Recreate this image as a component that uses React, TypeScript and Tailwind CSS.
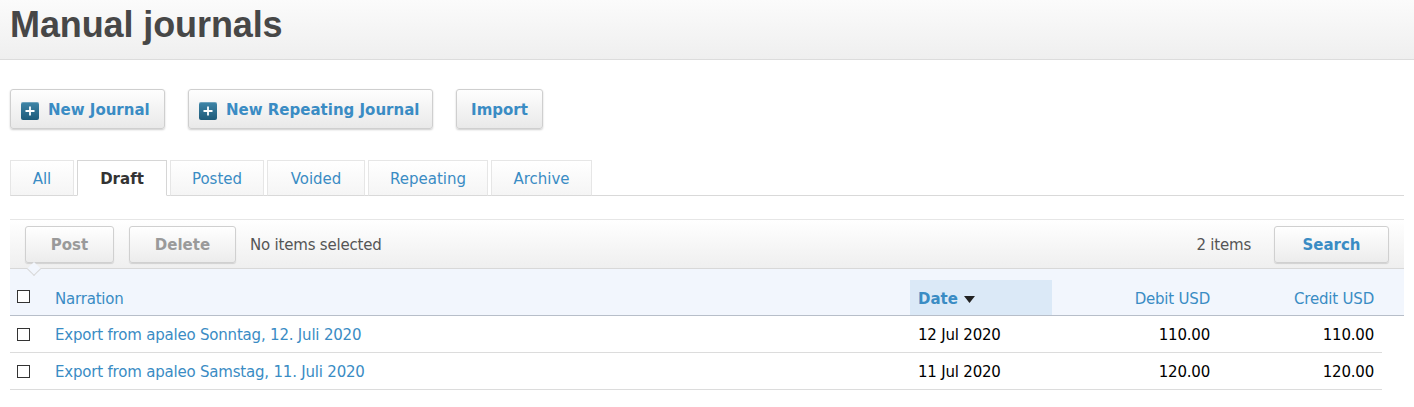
import React from 'react';

const body = { fontFamily: '"DejaVu Sans", Verdana, sans-serif' };

function PlusIcon() {
  return (
    <span className="flex h-[18px] w-[18px] items-center justify-center rounded-[2px] bg-gradient-to-b from-[#3f86a8] to-[#1f5b7a] shadow-[inset_0_1px_0_rgba(255,255,255,0.25)]">
      <svg width="12" height="12" viewBox="0 0 12 12">
        <path d="M6 1.5v9M1.5 6h9" stroke="#fff" strokeWidth="1.8" />
      </svg>
    </span>
  );
}

function ActionButton({ label, icon, width }: { label: string; icon?: boolean; width: string }) {
  return (
    <button
      className={`flex h-[40px] ${width} items-center gap-[9px] rounded-[3px] border border-[#cfcfcf] bg-gradient-to-b from-[#fefefe] to-[#e9e9e9] px-[10px] pt-[3px] text-[15px] font-bold text-[#3a8cc4] shadow-[0_1px_2px_rgba(0,0,0,0.2)] ${icon ? '' : 'justify-center'}`}
    >
      {icon ? <PlusIcon /> : null}
      {label}
    </button>
  );
}

const tabs = [
  { label: 'All', w: 'w-[64px]' },
  { label: 'Draft', w: 'w-[90px]', active: true },
  { label: 'Posted', w: 'w-[94px]' },
  { label: 'Voided', w: 'w-[98px]' },
  { label: 'Repeating', w: 'w-[120px]' },
  { label: 'Archive', w: 'w-[101px]' },
];

const rows = [
  { narration: 'Export from apaleo Sonntag, 12. Juli 2020', date: '12 Jul 2020', debit: '110.00', credit: '110.00' },
  { narration: 'Export from apaleo Samstag, 11. Juli 2020', date: '11 Jul 2020', debit: '120.00', credit: '120.00' },
];

function Checkbox() {
  return <span className="block h-[13px] w-[13px] border border-[#333] bg-white" />;
}

const toolBtn =
  'flex h-[37px] items-center justify-center rounded-[3px] border border-[#d0d0d0] bg-gradient-to-b from-white to-[#ececec] pt-[3px] text-[15px] font-bold shadow-[0_1px_1px_rgba(0,0,0,0.13)]';

export default function App() {
  return (
    <div className="min-h-[407px] bg-white" style={body}>
      <div className="h-[60px] border-b border-[#dcdcdc] bg-gradient-to-b from-[#fbfbfb] to-[#efefef] px-[10px] pt-[7px]">
        <h1
          className="text-[36px] font-bold leading-[36px] tracking-[-0.1px] text-[#474747]"
          style={{ fontFamily: '"Liberation Sans", Arial, sans-serif' }}
        >
          Manual journals
        </h1>
      </div>

      <div className="mt-[29px] flex gap-[23px] px-[10px]">
        <ActionButton label="New Journal" icon width="w-[155px]" />
        <ActionButton label="New Repeating Journal" icon width="w-[245px]" />
        <ActionButton label="Import" width="w-[87px]" />
      </div>

      <div className="mx-[10px] mt-[31px] flex h-[36px] gap-[3px] border-b border-[#d9d9d9]">
        {tabs.map((t) => (
          <div
            key={t.label}
            className={`flex h-[36px] ${t.w} items-center justify-center border pt-[3px] text-[15px] ${
              t.active
                ? 'border-[#d6d6d6] border-b-white bg-white font-bold text-[#333]'
                : 'border-[#e6e6e6] border-b-[#d9d9d9] bg-gradient-to-b from-white to-[#f5f5f5] text-[#3a8cc4]'
            }`}
          >
            {t.label}
          </div>
        ))}
      </div>

      <div className="relative mx-[10px] mt-[23px] flex h-[50px] items-center border-t border-b border-[#e6e6e6] border-b-[#d8d8d8] bg-gradient-to-b from-white to-[#efefef] pl-[15px] pr-[15px]">
        <button className={`${toolBtn} w-[89px] text-[#9a9a9a]`}>Post</button>
        <button className={`${toolBtn} ml-[15px] w-[107px] text-[#9a9a9a]`}>Delete</button>
        <span className="ml-[14px] pt-[3px] text-[15px] tracking-[-0.2px] text-[#555]">No items selected</span>
        <span className="ml-auto pt-[3px] text-[15px] tracking-[-0.2px] text-[#555]">2 items</span>
        <button className={`${toolBtn} ml-[23px] w-[115px] text-[#3a8cc4]`}>Search</button>
        <span className="absolute bottom-[-6px] left-[19px] h-[10px] w-[10px] rotate-45 border-r border-b border-[#d8d8d8] bg-[#f2f6fd]" />
      </div>

      <div className="mx-[10px] grid h-[47px] grid-cols-[45px_855px_142px_166px_164px_1fr] border-b border-[#b7bec9] bg-[#f2f6fd] text-[15px] tracking-[-0.2px] text-[#3a8cc4]">
        <div className="flex items-center pl-[7px] pt-[9px]">
          <Checkbox />
        </div>
        <div className="flex items-center pt-[14px]">Narration</div>
        <div className="mt-[11px] flex items-center gap-[6px] bg-[#dbe9f7] pl-[8px] pt-[3px] font-bold tracking-normal">
          Date
          <svg width="11" height="7" viewBox="0 0 11 7">
            <path d="M0 0h11L5.5 7z" fill="#222" />
          </svg>
        </div>
        <div className="flex items-center justify-end pr-[8px] pt-[14px]">Debit USD</div>
        <div className="flex items-center justify-end pr-[8px] pt-[14px]">Credit USD</div>
        <div />
      </div>

      {rows.map((r) => (
        <div
          key={r.narration}
          className="ml-[10px] grid h-[37px] w-[1372px] grid-cols-[45px_855px_142px_166px_164px] border-b border-[#dcdcdc] text-[15px] tracking-[-0.2px]"
        >
          <div className="flex items-center pl-[7px] pt-[1px]">
            <Checkbox />
          </div>
          <div className="flex items-center pt-[3px] text-[#3a8cc4]">{r.narration}</div>
          <div className="flex items-center pl-[8px] pt-[3px] text-black">{r.date}</div>
          <div className="flex items-center justify-end pr-[8px] pt-[3px] text-black">{r.debit}</div>
          <div className="flex items-center justify-end pr-[8px] pt-[3px] text-black">{r.credit}</div>
        </div>
      ))}
    </div>
  );
}
